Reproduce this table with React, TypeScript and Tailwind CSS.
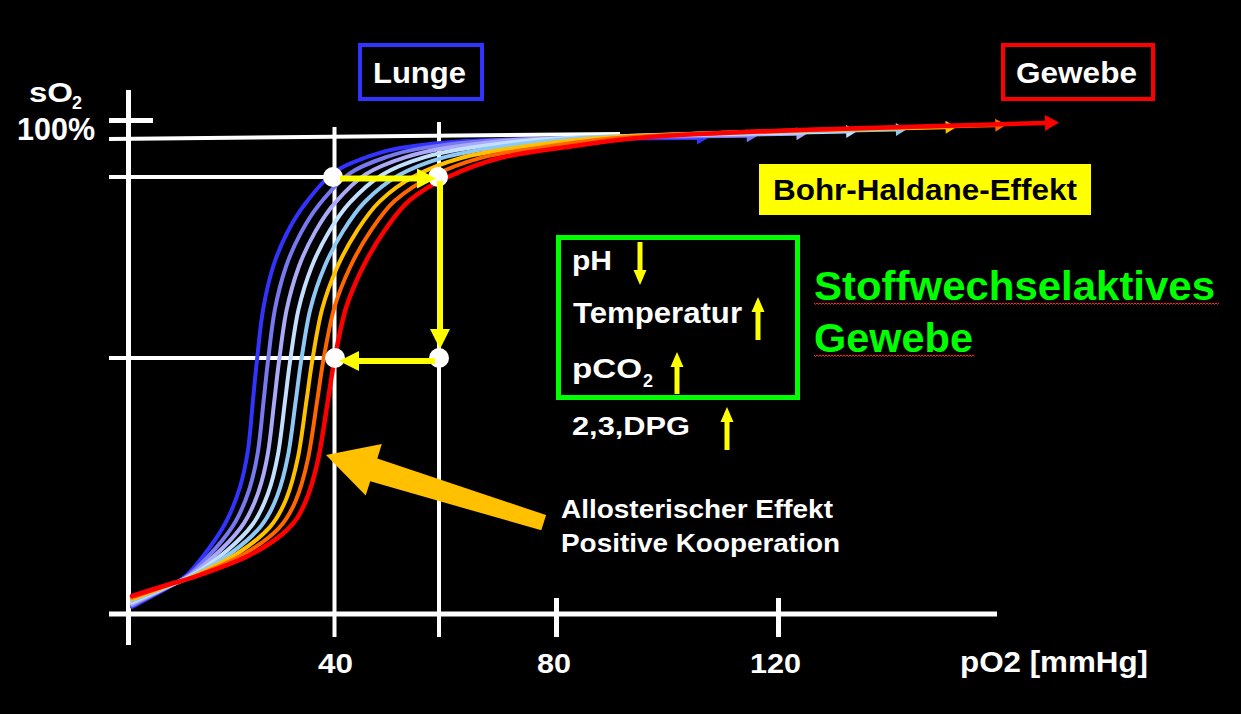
type Pt = [number, number];

// hand-traced from the slide: leftmost (blue) and rightmost (red) curve
const BLUE: Pt[] = [
  [132, 607], [167, 588], [187, 575], [210, 547], [227, 520], [240, 487], [248, 450],
  [253, 400], [257, 360], [263, 310], [273, 267], [287, 233], [305, 204], [333, 173],
  [367, 157], [400, 148], [467, 141], [560, 139], [697, 138],
];
const RED: Pt[] = [
  [132, 596], [167, 585], [200, 575], [250, 555], [287, 530], [305, 503], [318, 460],
  [328, 400], [335, 357], [346, 308], [363, 267], [385, 230], [410, 200], [448, 177],
  [500, 158], [567, 147], [650, 137], [800, 130], [1045, 123],
];

const COLORS = ["#3333ff", "#7878f0", "#aaaaf8", "#c4e0ff", "#8ec8f4", "#ffc000", "#ff6600", "#ff0000"];

function smooth(pts: Pt[]) {
  let d = `M${pts[0][0]} ${pts[0][1]}`;
  for (let i = 0; i < pts.length - 1; i++) {
    const p0 = pts[i - 1] ?? pts[i];
    const p1 = pts[i];
    const p2 = pts[i + 1];
    const p3 = pts[i + 2] ?? p2;
    const c1x = p1[0] + (p2[0] - p0[0]) / 6;
    const c1y = p1[1] + (p2[1] - p0[1]) / 6;
    const c2x = p2[0] - (p3[0] - p1[0]) / 6;
    const c2y = p2[1] - (p3[1] - p1[1]) / 6;
    d += ` C${c1x.toFixed(1)} ${c1y.toFixed(1)} ${c2x.toFixed(1)} ${c2y.toFixed(1)} ${p2[0]} ${p2[1]}`;
  }
  return d;
}

function head(from: Pt, to: Pt, len: number, half: number) {
  const dx = to[0] - from[0];
  const dy = to[1] - from[1];
  const l = Math.hypot(dx, dy);
  const ux = dx / l;
  const uy = dy / l;
  const tip: Pt = [to[0] + ux * len, to[1] + uy * len];
  const a: Pt = [to[0] - uy * half, to[1] + ux * half];
  const b: Pt = [to[0] + uy * half, to[1] - ux * half];
  return `${tip[0]},${tip[1]} ${a[0]},${a[1]} ${b[0]},${b[1]}`;
}

function squiggle(x0: number, x1: number, y: number) {
  let d = `M${x0} ${y}`;
  let up = true;
  for (let x = x0 + 1.5; x <= x1; x += 1.5) {
    d += ` L${x} ${up ? y + 1.3 : y}`;
    up = !up;
  }
  return d;
}

function Curves() {
  return (
    <g fill="none" strokeLinecap="round">
      {COLORS.map((c, k) => {
        const f = k / (COLORS.length - 1);
        const pts = BLUE.map((p, i) => [p[0] + (RED[i][0] - p[0]) * f, p[1] + (RED[i][1] - p[1]) * f] as Pt);
        const n = pts.length;
        const isRed = k === COLORS.length - 1;
        return (
          <g key={c}>
            <path d={smooth(pts)} stroke={c} strokeWidth={isRed ? 4.5 : 4} />
            <polygon points={head(pts[n - 2], pts[n - 1], isRed ? 14 : 11, isRed ? 8 : 6.5)} fill={c} />
          </g>
        );
      })}
    </g>
  );
}

function SmallArrow({ x, y1, y2 }: { x: number; y1: number; y2: number }) {
  // y1 = tail, y2 = tip
  const dir = y2 > y1 ? 1 : -1;
  const base = y2 - dir * 15;
  return (
    <g fill="#ffff00">
      <rect x={x - 2.5} y={Math.min(y1, base)} width={5} height={Math.abs(base - y1)} />
      <polygon points={`${x},${y2} ${x - 6.5},${base} ${x + 6.5},${base}`} />
    </g>
  );
}

function Label({
  x, y, size, len, fill = "#ffffff", children,
}: { x: number; y: number; size: number; len?: number; fill?: string; children: string }) {
  return (
    <text x={x} y={y} fontSize={size} fill={fill} textLength={len} lengthAdjust={len ? "spacingAndGlyphs" : undefined}>
      {children}
    </text>
  );
}

export default function App() {
  return (
    <div className="min-h-screen w-full bg-black overflow-hidden font-['Liberation_Sans',Arial,sans-serif] font-bold">
      <svg width={1241} height={714} viewBox="0 0 1241 714" className="block">
        {/* axes and guide lines */}
        <g stroke="#ffffff" strokeWidth={5}>
          <line x1={128.5} y1={90} x2={128.5} y2={645} />
          <line x1={109} y1={614} x2={997} y2={614} />
          <line x1={109} y1={120.5} x2={153} y2={120.5} />
          <line x1={556.5} y1={598} x2={556.5} y2={637} />
          <line x1={778.5} y1={598} x2={778.5} y2={637} />
        </g>
        <g stroke="#ffffff" strokeWidth={4}>
          <line x1={109} y1={139} x2={620} y2={134} />
          <line x1={334.5} y1={127} x2={334.5} y2={637} />
          <line x1={439} y1={122} x2={439} y2={637} />
          <line x1={109} y1={177} x2={334} y2={177} />
          <line x1={109} y1={358} x2={334} y2={358} />
        </g>

        <Curves />

        {/* measuring points */}
        <g fill="#ffffff">
          <circle cx={333} cy={177} r={10} />
          <circle cx={438} cy={177} r={10} />
          <circle cx={335} cy={358} r={10} />
          <circle cx={439} cy={358} r={10} />
        </g>

        {/* yellow path 40 -> 60 -> down -> back */}
        <g fill="#ffff00">
          <rect x={340} y={175.5} width={78} height={6} />
          <polygon points="436,178.5 417,168.5 417,188.5" />
          <rect x={437} y={181} width={6} height={148} />
          <polygon points="440,349 430,329 450,329" />
          <rect x={358} y={358} width={77} height={6} />
          <polygon points="339,361 359,351 359,371" />
        </g>

        {/* big allosteric arrow */}
        <polygon
          points="326,455 381.8,444.1 377.3,458.4 546.1,515.1 541.3,530.3 370.2,481.3 365.7,495.6"
          fill="#ffc000"
        />

        {/* y axis labels */}
        <Label x={29} y={102} size={28} len={44}>sO</Label>
        <Label x={72} y={109} size={19} len={10}>2</Label>
        <Label x={17} y={140} size={31} len={78}>100%</Label>

        {/* Lunge / Gewebe boxes */}
        <rect x={360} y={45} width={122} height={54} fill="none" stroke="#3333ff" strokeWidth={4} />
        <Label x={373} y={83} size={30} len={93}>Lunge</Label>
        <rect x={1003} y={45} width={150} height={54} fill="none" stroke="#ff0000" strokeWidth={4} />
        <Label x={1016} y={83} size={30} len={121}>Gewebe</Label>

        {/* Bohr-Haldane */}
        <rect x={759} y={164} width={332} height={51} fill="#ffff00" />
        <Label x={773} y={200} size={30} len={304} fill="#000000">Bohr-Haldane-Effekt</Label>

        {/* factors box */}
        <rect x={558.5} y={237.5} width={239} height={160} fill="none" stroke="#00ff00" strokeWidth={5} />
        <Label x={572} y={270} size={27} len={40}>pH</Label>
        <SmallArrow x={640} y1={242} y2={285} />
        <Label x={573} y={323} size={29} len={169}>Temperatur</Label>
        <SmallArrow x={758} y1={340} y2={297} />
        <Label x={572} y={378} size={28} len={70}>pCO</Label>
        <Label x={643} y={387} size={18} len={10}>2</Label>
        <SmallArrow x={677} y1={394} y2={352} />
        <Label x={572} y={435} size={26} len={118}>2,3,DPG</Label>
        <SmallArrow x={727} y1={450} y2={407} />

        {/* tissue label with spell-check squiggle */}
        <Label x={814} y={300} size={40} len={401} fill="#00ff00">Stoffwechselaktives</Label>
        <Label x={814} y={352} size={40} len={159} fill="#00ff00">Gewebe</Label>
        <g fill="none" stroke="#ff3030" strokeWidth={1}>
          <path d={squiggle(814, 1220, 303)} />
          <path d={squiggle(814, 975, 355)} />
        </g>

        <Label x={561} y={518} size={26} len={272}>Allosterischer Effekt</Label>
        <Label x={561} y={552} size={26} len={279}>Positive Kooperation</Label>

        {/* x axis labels */}
        <Label x={318} y={673} size={28} len={35}>40</Label>
        <Label x={537} y={673} size={28} len={34}>80</Label>
        <Label x={750} y={673} size={28} len={51}>120</Label>
        <Label x={960} y={672} size={29} len={188}>pO2 [mmHg]</Label>
      </svg>
    </div>
  );
}
